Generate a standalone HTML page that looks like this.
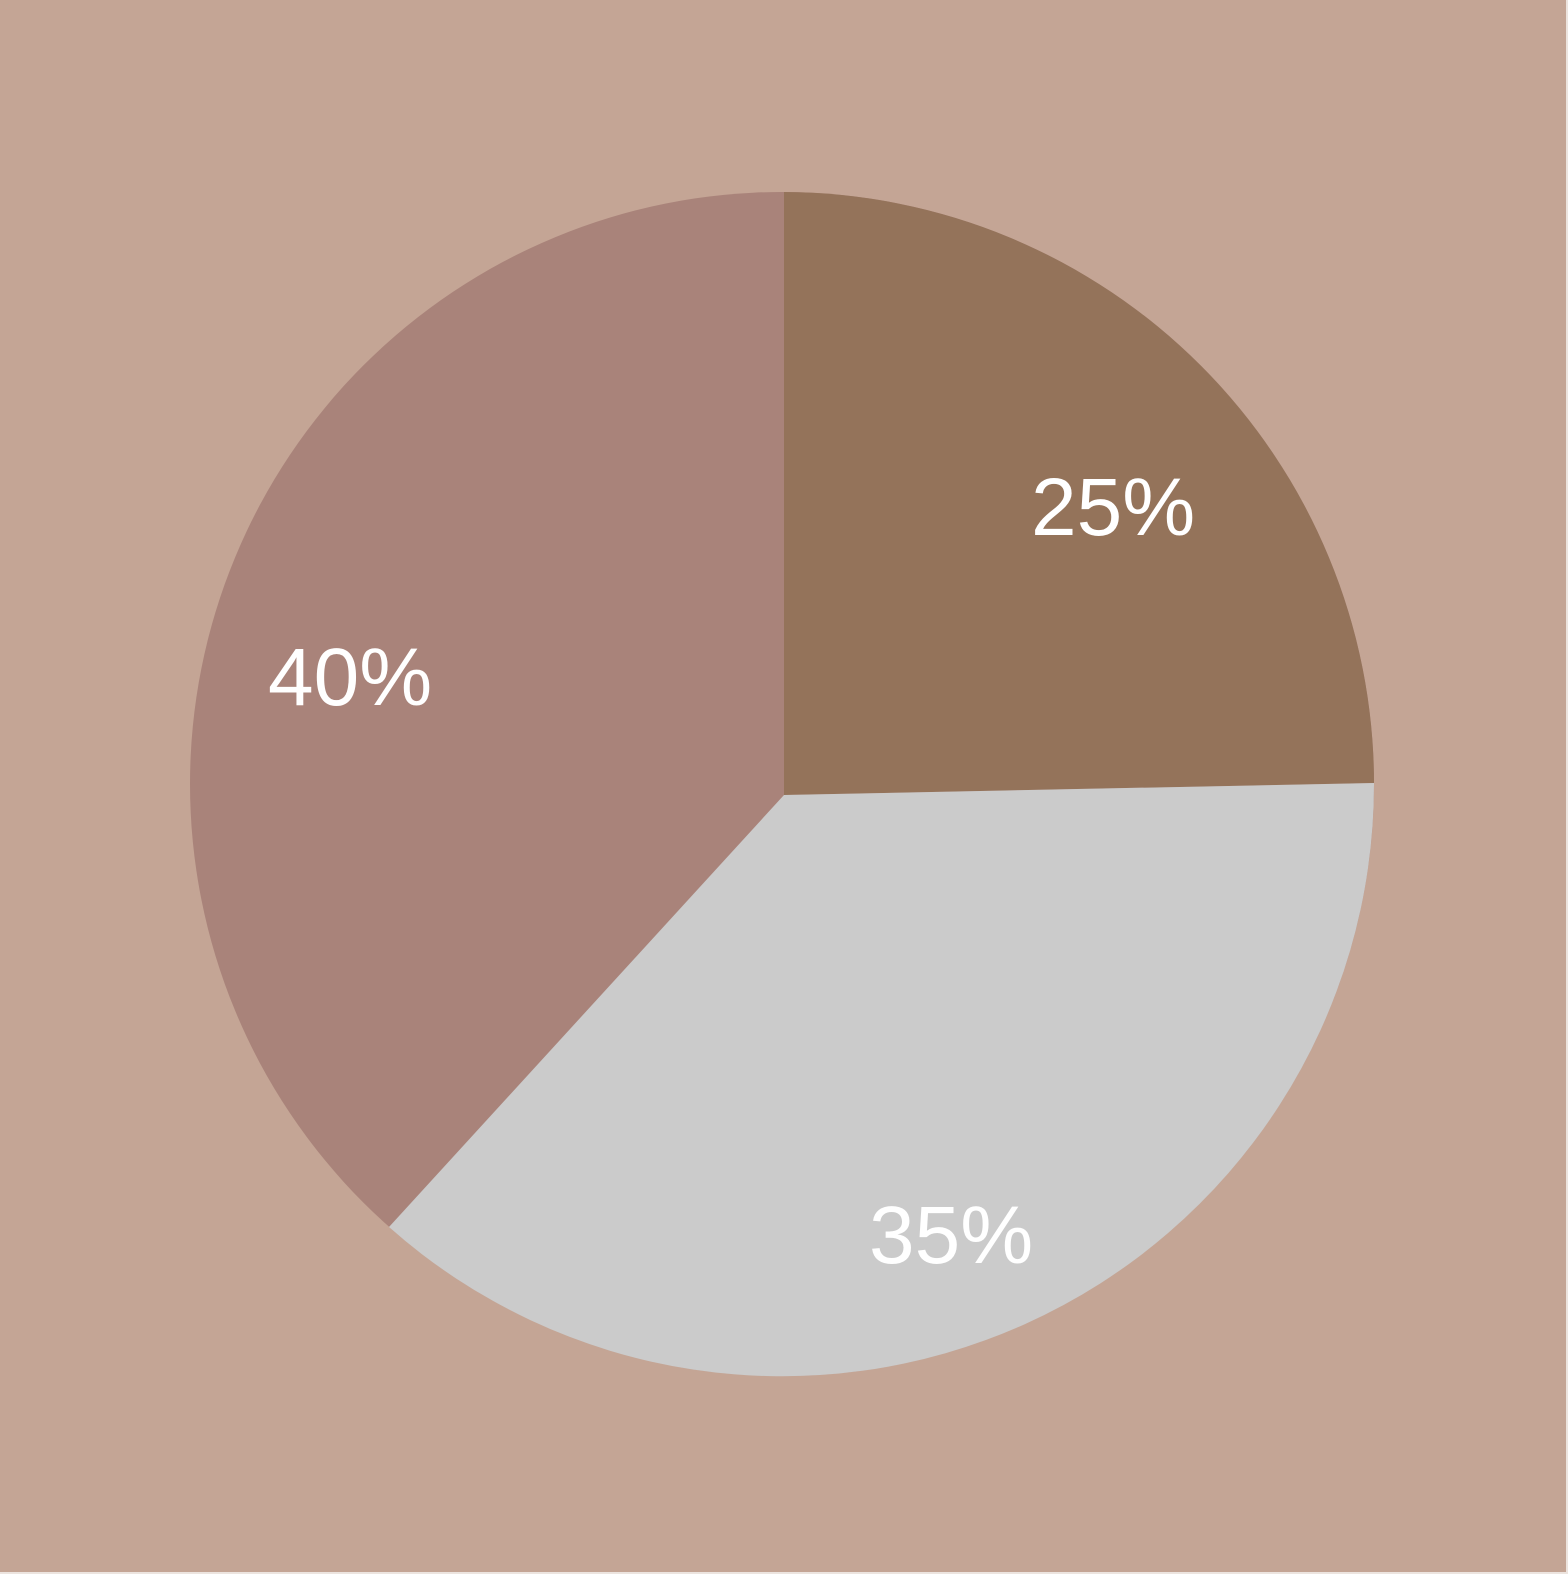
<!DOCTYPE html>
<html><head><meta charset="utf-8"><style>
html,body{margin:0;padding:0;background:#C4A595;}
svg{display:block;}
text{font-family:"Liberation Sans",sans-serif;fill:#fff;font-size:82px;}
</style></head><body>
<svg width="1568" height="1574" viewBox="0 0 1568 1574">
<rect x="0" y="0" width="1568" height="1574" fill="#C4A595"/>
<rect x="1566" y="0" width="2" height="1574" fill="#ECE4DF"/>
<rect x="0" y="1572" width="1568" height="2" fill="#ECE4DF"/>
<circle cx="782" cy="784" r="592" fill="#A9837A"/>
<path d="M784 795 L784 192 A592 592 0 0 1 1374 783 Z" fill="#94735A"/>
<path d="M784 795 L1374 783 A592 592 0 0 1 389 1227 Z" fill="#CBCBCB"/>
<text x="1031" y="535">25%</text>
<text x="268" y="705">40%</text>
<text x="869" y="1263">35%</text>
</svg>
</body></html>
